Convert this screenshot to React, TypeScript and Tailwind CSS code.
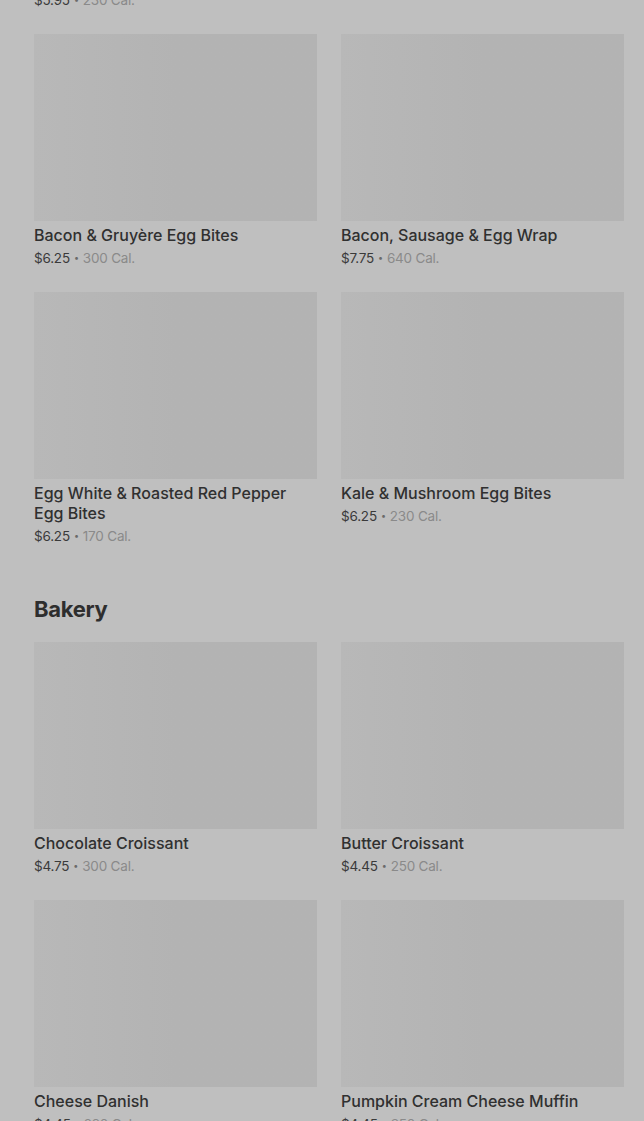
import React from "react";

type Item = { name: string; price: string; cal: string };

const breakfast: Item[] = [
  { name: "Bacon & Gruyère Egg Bites", price: "$6.25", cal: "300 Cal." },
  { name: "Bacon, Sausage & Egg Wrap", price: "$7.75", cal: "640 Cal." },
  { name: "Egg White & Roasted Red Pepper Egg Bites", price: "$6.25", cal: "170 Cal." },
  { name: "Kale & Mushroom Egg Bites", price: "$6.25", cal: "230 Cal." },
];

const bakery: Item[] = [
  { name: "Chocolate Croissant", price: "$4.75", cal: "300 Cal." },
  { name: "Butter Croissant", price: "$4.45", cal: "250 Cal." },
  { name: "Cheese Danish", price: "$4.45", cal: "290 Cal." },
  { name: "Pumpkin Cream Cheese Muffin", price: "$4.45", cal: "350 Cal." },
];

function PriceLine({ price, cal }: { price: string; cal: string }) {
  return (
    <div className="flex items-center text-[13.5px] leading-5 tracking-[-0.2px] text-[#3a3a3a]">
      <span>{price}</span>
      <span className="mx-[4px] text-[9px] text-[#6a6a6a]">•</span>
      <span className="text-[#8a8a8a]">{cal}</span>
    </div>
  );
}

function Card({ item }: { item: Item }) {
  return (
    <div className="flex flex-col">
      <div className="h-[187px] w-full bg-gradient-to-r from-[#b8b8b8] via-[#b3b3b3] to-[#b3b3b3]" />
      <div className="mt-1 text-base font-medium leading-5 text-[#303030]">{item.name}</div>
      <div className="mt-[3px]">
        <PriceLine price={item.price} cal={item.cal} />
      </div>
    </div>
  );
}

export default function App() {
  return (
    <div
      className="h-[1121px] w-full overflow-hidden bg-[#bfbfbf]"
      style={{ fontFamily: "Inter, 'Noto Sans', sans-serif" }}
    >
      <div className="-mt-[10px] pl-[34px] pr-[20px]">
        <div className="grid grid-cols-2 gap-x-6 gap-y-6">
          <div>
            <PriceLine price="$5.95" cal="230 Cal." />
          </div>
          <div />
          {breakfast.map((it) => (
            <Card key={it.name} item={it} />
          ))}
        </div>
        <h2 className="mt-[49px] mb-[19px] text-[22px] font-bold leading-7 tracking-[-0.3px] text-[#2e2e2e]">
          Bakery
        </h2>
        <div className="grid grid-cols-2 gap-x-6 gap-y-6">
          {bakery.map((it) => (
            <Card key={it.name} item={it} />
          ))}
        </div>
      </div>
    </div>
  );
}
